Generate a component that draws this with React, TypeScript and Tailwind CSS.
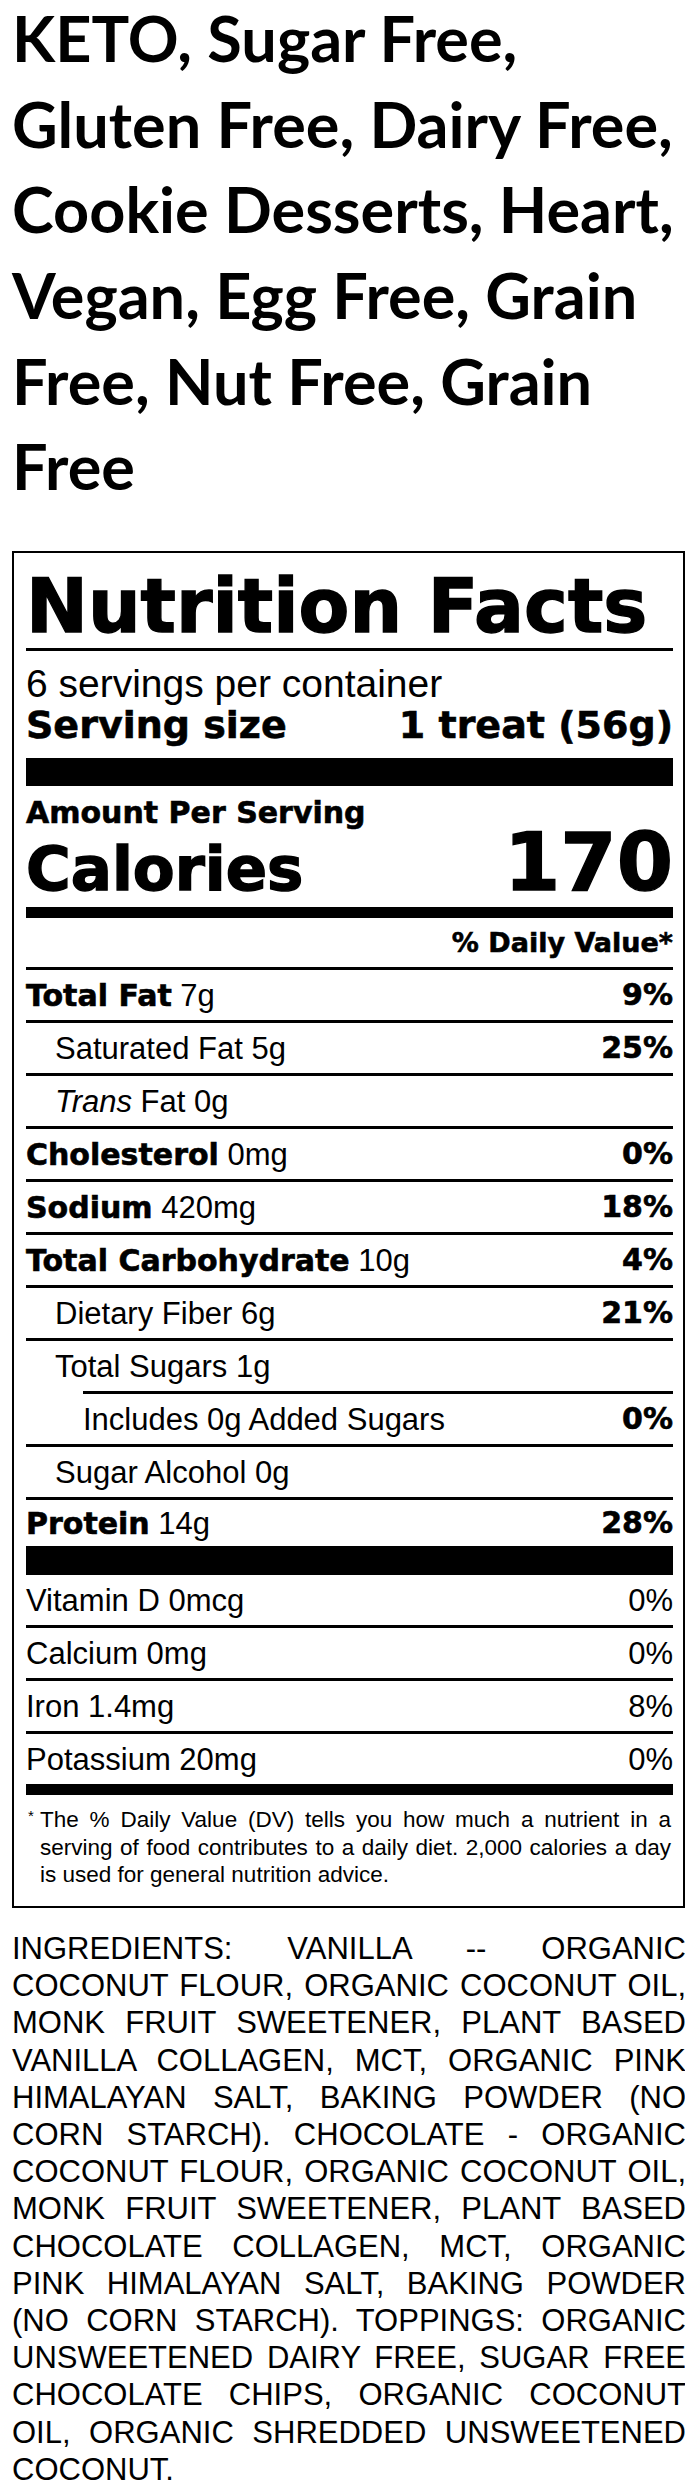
import React from "react";

const reg = "font-['Liberation_Sans',Arial,sans-serif] font-normal";
const blk = "font-['DejaVu_Sans',sans-serif] font-bold [-webkit-text-stroke:0.6px_black]";
const huge = "font-['DejaVu_Sans',sans-serif] font-bold [-webkit-text-stroke:1.4px_black]";

const title = [
  "KETO, Sugar Free,",
  "Gluten Free, Dairy Free,",
  "Cookie Desserts, Heart,",
  "Vegan, Egg Free, Grain",
  "Free, Nut Free, Grain",
  "Free",
];

const ingredients = [
  "INGREDIENTS: VANILLA -- ORGANIC",
  "COCONUT FLOUR, ORGANIC COCONUT OIL,",
  "MONK FRUIT SWEETENER, PLANT BASED",
  "VANILLA COLLAGEN, MCT, ORGANIC PINK",
  "HIMALAYAN SALT, BAKING POWDER (NO",
  "CORN STARCH). CHOCOLATE - ORGANIC",
  "COCONUT FLOUR, ORGANIC COCONUT OIL,",
  "MONK FRUIT SWEETENER, PLANT BASED",
  "CHOCOLATE COLLAGEN, MCT, ORGANIC",
  "PINK HIMALAYAN SALT, BAKING POWDER",
  "(NO CORN STARCH). TOPPINGS: ORGANIC",
  "UNSWEETENED DAIRY FREE, SUGAR FREE",
  "CHOCOLATE CHIPS, ORGANIC COCONUT",
  "OIL, ORGANIC SHREDDED UNSWEETENED",
  "COCONUT.",
];

function Rule({ className = "" }: { className?: string }) {
  return <div className={`h-[3px] bg-black ${className}`} />;
}

function Row({
  children,
  dv,
  light = false,
  className = "h-[50px]",
}: {
  children: React.ReactNode;
  dv?: string;
  light?: boolean;
  className?: string;
}) {
  return (
    <div className={`flex items-center justify-between ${className}`}>
      <div className={`${reg} text-[31px] leading-none whitespace-nowrap`}>{children}</div>
      {dv && (
        <span
          className={
            light
              ? `${reg} text-[31px] leading-none`
              : `${blk} text-[30px] leading-none`
          }
        >
          {dv}
        </span>
      )}
    </div>
  );
}

const B = ({ children }: { children: React.ReactNode }) => (
  <span className={`${blk} text-[30px]`}>{children}</span>
);

export default function App() {
  return (
    <div className="w-full overflow-hidden bg-white text-black">
      <h1 className="flex flex-col gap-[9.7px] pl-[12px] font-['Lato',sans-serif] text-[63px] font-bold leading-[76px]">
        {title.map((t) => (
          <span key={t} className="whitespace-nowrap">
            {t}
          </span>
        ))}
      </h1>

      {/* label */}
      <div className="ml-[12px] mt-[47px] border-2 border-black pl-[12px] pr-[10px] pt-[16px] pb-[17px]">
        <div className={`${huge} text-[74px] leading-none whitespace-nowrap`}>Nutrition Facts</div>
        <Rule className="mt-[5px]" />
        <div className={`${reg} text-[39px] leading-none mt-[13px]`}>6 servings per container</div>
        <div className={`${blk} text-[38px] leading-none mt-[3px] flex justify-between`}>
          <span>Serving size</span>
          <span>1 treat (56g)</span>
        </div>
        <div className="mt-[14px] h-[28px] bg-black" />

        <div className={`${blk} text-[30px] leading-none mt-[12px]`}>Amount Per Serving</div>
        <div className="flex items-baseline justify-between -mt-[6px]">
          <span className={`${huge} text-[61px] leading-none`}>Calories</span>
          <span className={`${huge} text-[81px] leading-none`}>170</span>
        </div>
        <div className="mt-[4px] h-[11px] bg-black" />
        <div className={`${blk} text-[27px] leading-none mt-[11px] text-right`}>% Daily Value*</div>
        <Rule className="mt-[11px]" />

        <Row dv="9%">
          <B>Total Fat</B> 7g
        </Row>
        <Rule />
        <Row dv="25%" className="h-[50px] pl-[29px]">
          Saturated Fat 5g
        </Row>
        <Rule />
        <Row className="h-[50px] pl-[29px]">
          <i>Trans</i> Fat 0g
        </Row>
        <Rule />
        <Row dv="0%">
          <B>Cholesterol</B> 0mg
        </Row>
        <Rule />
        <Row dv="18%">
          <B>Sodium</B> 420mg
        </Row>
        <Rule />
        <Row dv="4%">
          <B>Total Carbohydrate</B> 10g
        </Row>
        <Rule />
        <Row dv="21%" className="h-[50px] pl-[29px]">
          Dietary Fiber 6g
        </Row>
        <Rule />
        <Row className="h-[50px] pl-[29px]">Total Sugars 1g</Row>
        <Rule className="ml-[57px]" />
        <Row dv="0%" className="h-[50px] pl-[57px]">
          Includes 0g Added Sugars
        </Row>
        <Rule />
        <Row className="h-[50px] pl-[29px]">Sugar Alcohol 0g</Row>
        <Rule />
        <Row dv="28%" className="h-[46px]">
          <B>Protein</B> 14g
        </Row>
        <div className="h-[29px] bg-black" />

        <Row dv="0%" light>
          Vitamin D 0mcg
        </Row>
        <Rule />
        <Row dv="0%" light>
          Calcium 0mg
        </Row>
        <Rule />
        <Row dv="8%" light>
          Iron 1.4mg
        </Row>
        <Rule />
        <Row dv="0%" light>
          Potassium 20mg
        </Row>
        <div className="h-[11px] bg-black" />

        <div className={`${reg} mt-[11px] flex text-[22.5px] leading-[27.5px]`}>
          <span className="w-[14px] shrink-0 pl-[2px] text-[15px] leading-[20px]">*</span>
          <div className="min-w-0 flex-1 pr-[2px]">
            <div className="text-justify [text-align-last:justify]">
              The % Daily Value (DV) tells you how much a nutrient in a
            </div>
            <div className="text-justify [text-align-last:justify]">
              serving of food contributes to a daily diet. 2,000 calories a day
            </div>
            <div>is used for general nutrition advice.</div>
          </div>
        </div>
      </div>

      {/* ingredients */}
      <div className={`${reg} ml-[12px] mt-[22px] w-[674px] text-[31px] leading-[37.2px]`}>
        {ingredients.map((line, i) => (
          <div
            key={i}
            className={
              i < ingredients.length - 1 ? "text-justify [text-align-last:justify]" : ""
            }
          >
            {line}
          </div>
        ))}
      </div>
    </div>
  );
}
